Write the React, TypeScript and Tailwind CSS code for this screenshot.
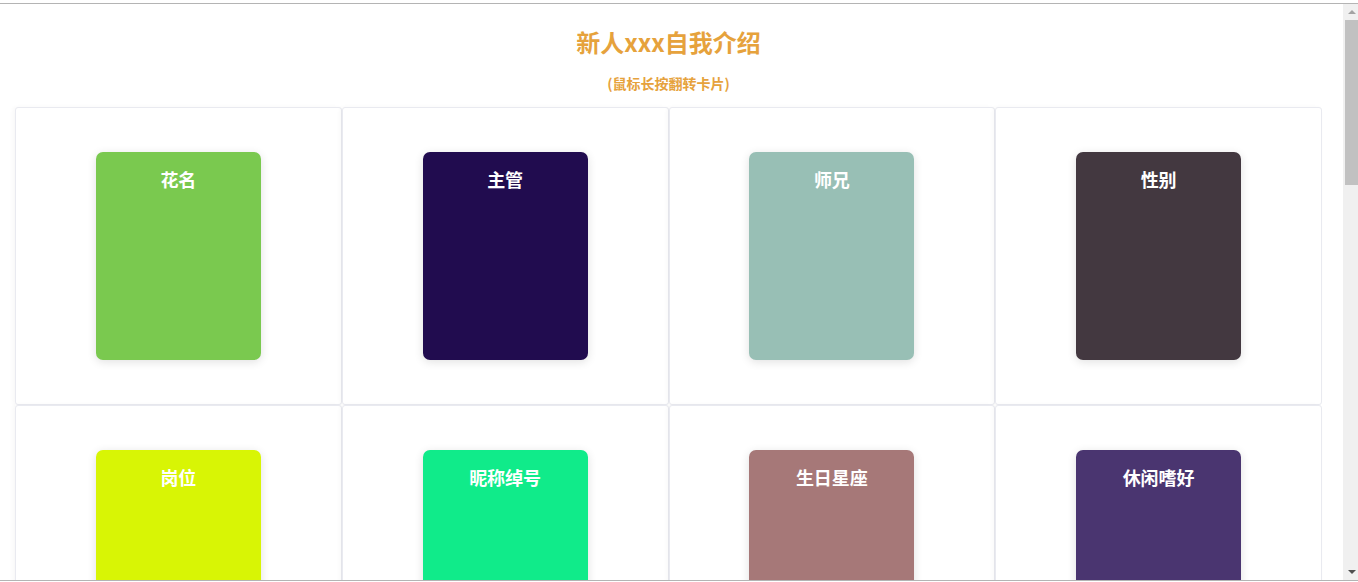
import { useState } from "react";

const cards = [
  { label: "花名", color: "bg-[#7ac94f]" },
  { label: "主管", color: "bg-[#210c4f]" },
  { label: "师兄", color: "bg-[#98bfb5]" },
  { label: "性别", color: "bg-[#433840]" },
  { label: "岗位", color: "bg-[#d8f505]" },
  { label: "昵称绰号", color: "bg-[#10eb8a]" },
  { label: "生日星座", color: "bg-[#a67878]" },
  { label: "休闲嗜好", color: "bg-[#4a3570]" },
];

function FlipCard({ label, color }: { label: string; color: string }) {
  const [flipped, setFlipped] = useState(false);

  return (
    <div className="h-[298px] rounded-[3px] border border-[#e9eaf0] bg-white flex items-center justify-center shadow-[-2px_0_4px_rgba(0,0,0,0.03)]">
      <div
        onMouseDown={() => setFlipped(true)}
        onMouseUp={() => setFlipped(false)}
        onMouseLeave={() => setFlipped(false)}
        className={`w-[165px] h-[208px] rounded-[7px] ${color} shadow-[0_2px_10px_rgba(0,0,0,0.12)] pt-[12px] text-center cursor-pointer select-none`}
      >
        <p className="text-white text-[18px] font-bold leading-[30px]">{flipped ? "" : label}</p>
      </div>
    </div>
  );
}

// window scrollbar, drawn since the page frame is part of the shot
function ScrollBar() {
  return (
    <div className="w-[15px] shrink-0 bg-[#f0f0f0] flex flex-col">
      <div className="h-[16px] flex items-center justify-center pl-[2px]">
        <div className="w-0 h-0 border-x-[4px] border-x-transparent border-b-[4px] border-b-[#a3a3a3]" />
      </div>
      <div className="h-[165px] ml-[2px] bg-[#c1c1c1]" />
      <div className="flex-1" />
      <div className="h-[16px] flex items-center justify-center pl-[2px]">
        <div className="w-0 h-0 border-x-[4px] border-x-transparent border-t-[4px] border-t-[#505050]" />
      </div>
    </div>
  );
}

export default function App() {
  return (
    <div className="h-[582px] bg-white pt-[3px] font-['Noto_Sans_CJK_SC','Noto_Sans',sans-serif]">
      <div className="h-[578px] border-y border-[#b4b4b4] flex overflow-hidden">
        <div className="flex-1 overflow-hidden pl-[15px] pr-[21px]">
          <h1 className="pt-[21px] text-center text-[24px] font-bold leading-[34px] text-[#e6a23c]">
            新人xxx自我介绍
          </h1>
          <p className="mt-[14px] text-center text-[14px] font-bold leading-[20px] text-[#e6a23c]">
            (鼠标长按翻转卡片)
          </p>
          <div className="mt-[14px] grid grid-cols-4">
            {cards.map((c) => (
              <FlipCard key={c.label} label={c.label} color={c.color} />
            ))}
          </div>
        </div>
        <ScrollBar />
      </div>
    </div>
  );
}
